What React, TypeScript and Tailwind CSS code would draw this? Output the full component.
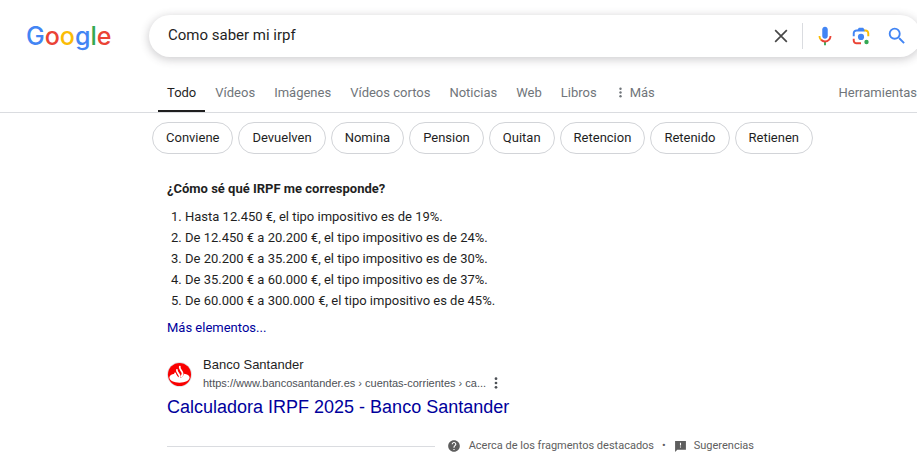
import { useState } from "react";
import { clsx } from "clsx";

const tabs = ["Todo", "Vídeos", "Imágenes", "Vídeos cortos", "Noticias", "Web", "Libros"];

const chips = ["Conviene", "Devuelven", "Nomina", "Pension", "Quitan", "Retencion", "Retenido", "Retienen"];

const brackets = [
  "Hasta 12.450 €, el tipo impositivo es de 19%.",
  "De 12.450 € a 20.200 €, el tipo impositivo es de 24%.",
  "De 20.200 € a 35.200 €, el tipo impositivo es de 30%.",
  "De 35.200 € a 60.000 €, el tipo impositivo es de 37%.",
  "De 60.000 € a 300.000 €, el tipo impositivo es de 45%.",
];

function DotsIcon({ className }: { className?: string }) {
  return (
    <svg viewBox="0 0 4 14" className={className} fill="currentColor" aria-hidden="true">
      <circle cx="2" cy="2" r="1.6" />
      <circle cx="2" cy="7" r="1.6" />
      <circle cx="2" cy="12" r="1.6" />
    </svg>
  );
}

function CloseIcon() {
  return (
    <svg viewBox="0 0 24 24" className="h-5 w-5" fill="none" stroke="#474747" strokeWidth="2" aria-hidden="true">
      <path d="M5 5l14 14M19 5L5 19" />
    </svg>
  );
}

function MicIcon() {
  return (
    <svg viewBox="0 0 24 24" className="h-[22px] w-[22px]" aria-hidden="true">
      <path fill="#4285f4" d="M12 15c1.66 0 3-1.31 3-2.97v-7.02c0-1.66-1.34-3.01-3-3.01s-3 1.34-3 3.01v7.02c0 1.66 1.34 2.97 3 2.97z" />
      <path fill="#34a853" d="M11 18.08h2v3.92h-2z" />
      <path fill="#fbbc04" d="M7.05 16.87c-1.27-1.33-2.05-2.83-2.05-4.87h2c0 1.45.56 2.42 1.47 3.38v.32l-1.15 1.18z" />
      <path fill="#ea4335" d="M12 16.93a4.97 5.25 0 0 1 -3.54 -1.55l-1.41 1.49c1.26 1.34 3.02 2.13 4.95 2.13 3.87 0 6.99-2.92 6.99-7h-1.99c0 2.92-2.24 4.93-5 4.93z" />
    </svg>
  );
}

function LensIcon() {
  return (
    <svg viewBox="0 0 192 192" className="h-[22px] w-[22px]" aria-hidden="true">
      <circle fill="#34a853" cx="144" cy="148" r="19" />
      <circle fill="#4285f4" cx="96" cy="104" r="27" />
      <path fill="#ea4335" d="M24 120v15.200c0 18.110 14.690 32.800 32.800 32.800H96v-17H57c-9 0-16-7-16-16v-15z" />
      <path fill="#fbbc04" d="M168 98V72.800c0-18.110-14.690-32.800-32.800-32.800H122v17h13c9 0 16 7 16 16v25z" />
      <path fill="#4285f4" d="M24 98V72.800C24 54.690 38.690 40 56.800 40H66l12-16h36l12 16v17H57c-9 0-16 7-16 16v25z" />
    </svg>
  );
}

function SearchIcon() {
  return (
    <svg viewBox="0 0 24 24" className="h-[22px] w-[22px]" fill="#4285f4" aria-hidden="true">
      <path d="M15.5 14h-.79l-.28-.27A6.47 6.47 0 0 0 16 9.5 6.5 6.5 0 1 0 9.5 16c1.61 0 3.09-.59 4.23-1.57l.27.28v.79l5 4.99L20.49 19l-4.99-5zm-6 0C7.01 14 5 11.99 5 9.5S7.01 5 9.5 5 14 7.01 14 9.5 11.99 14 9.5 14z" />
    </svg>
  );
}

function SantanderIcon() {
  return (
    <svg viewBox="0 0 26 26" className="h-[25px] w-[25px]" aria-hidden="true">
      <circle cx="13" cy="13" r="12.5" fill="#fff" stroke="#d9dbe0" />
      <circle cx="13" cy="13" r="12" fill="#f90000" />
      {/* base and flame */}
      <path fill="#fff" d="M2.500 16.200c0-2.200 2.200-3.700 5.500-4.100.3 1.800 2.200 3.900 5 4.400 2.500-.4 4.300-2 4.600-4.400 3.600.4 5.900 1.900 5.900 4.100 0 3-4.700 5.300-10.500 5.300S2.500 19.200 2.500 16.200z" />
      <path fill="none" stroke="#fff" strokeWidth="1.900" strokeLinecap="round" d="M13.300 4.800c-1 2.500 3.100 4.900 2.900 7.300-.1 1.200-.6 2-1 2.600M10.300 8.300c-.6 2.300 3 4.300 2.900 6.500 0 .8-.2 1.300-.4 1.800M8.400 11.800c.1 2 2 3.200 2.600 4.800" />
    </svg>
  );
}

function HelpIcon() {
  return (
    <svg viewBox="0 0 24 24" className="h-[14px] w-[14px]" fill="#5e5e5e" aria-hidden="true">
      <path d="M12 2C6.480 2 2 6.480 2 12s4.480 10 10 10 10-4.480 10-10S17.520 2 12 2zm1 17h-2v-2h2v2zm2.070-7.750-.9.920C13.450 12.900 13 13.500 13 15h-2v-.5c0-1.100.45-2.100 1.170-2.830l1.240-1.260c.37-.36.59-.86.59-1.410 0-1.100-.9-2-2-2s-2 .9-2 2H8c0-2.210 1.790-4 4-4s4 1.790 4 4c0 .88-.36 1.680-.93 2.250z" />
    </svg>
  );
}

function FeedbackIcon() {
  return (
    <svg viewBox="0 0 24 24" className="h-[13px] w-[13px]" fill="#5e5e5e" aria-hidden="true">
      <path d="M22 2H2v20l4-4h16V2zm-9 12h-2v-2h2v2zm0-4h-2V5h2v5z" />
    </svg>
  );
}

export default function App() {
  const [query, setQuery] = useState("Como saber mi irpf");
  const [activeTab, setActiveTab] = useState("Todo");

  return (
    <div className="min-h-screen overflow-x-hidden bg-white font-['Roboto',sans-serif] text-[13px] text-[#1f1f1f]">
      <header className="border-b border-[#dadce0]">
        <div className="flex items-center pt-[15px]">
          <a href="#" aria-label="Google" className="w-[149px] shrink-0 pl-[26px] font-['Inter',sans-serif] text-[25px] leading-8 font-medium">
            <span className="text-[#4285f4]">G</span>
            <span className="text-[#ea4335]">o</span>
            <span className="text-[#fbbc05]">o</span>
            <span className="text-[#4285f4]">g</span>
            <span className="text-[#34a853]">l</span>
            <span className="text-[#ea4335]">e</span>
          </a>
          <form
            role="search"
            onSubmit={(e) => e.preventDefault()}
            className="-mr-1 flex h-[42px] min-w-0 flex-1 items-center rounded-full bg-white pr-[13px] pl-[19px] shadow-[0_2px_8px_1px_rgba(64,60,67,0.24)]"
          >
            <input
              aria-label="Buscar"
              value={query}
              onChange={(e) => setQuery(e.target.value)}
              className="min-w-0 flex-1 bg-transparent pb-px text-[15px] outline-none"
            />
            <button type="button" aria-label="Borrar" onClick={() => setQuery("")} className="mr-[11px]">
              <CloseIcon />
            </button>
            <div className="flex items-center gap-[14px] border-l border-[#dadce0] py-[2px] pl-[11px]">
              <button type="button" aria-label="Buscar por voz"><MicIcon /></button>
              <button type="button" aria-label="Buscar por imagen"><LensIcon /></button>
              <button type="submit" aria-label="Buscar"><SearchIcon /></button>
            </div>
          </form>
        </div>

        <nav className="mt-[18px] flex h-[37px] items-stretch gap-px pl-[158px] text-[#70757a]">
          {tabs.map((tab) => (
            <a
              key={tab}
              href="#"
              onClick={() => setActiveTab(tab)}
              className={clsx(
                "flex items-center border-b-2 px-[9px]",
                activeTab === tab ? "border-[#1f1f1f] text-[#1f1f1f]" : "border-transparent",
              )}
            >
              {tab}
            </a>
          ))}
          <button type="button" className="flex items-center gap-2 border-b-2 border-transparent pl-3">
            <DotsIcon className="h-[11px] w-[3px]" />
            Más
          </button>
          <button type="button" className="ml-auto border-b-2 border-transparent">Herramientas</button>
        </nav>
      </header>

      <div className="mt-[9px] flex gap-[5px] pl-[152px]">
        {chips.map((chip) => (
          <button key={chip} type="button" className="h-8 rounded-full border border-[#d2d4d8] px-[13px]">
            {chip}
          </button>
        ))}
      </div>

      <main className="max-w-[754px] pl-[167px]">
        <h2 className="mt-[25px] leading-5 font-bold">¿Cómo sé qué IRPF me corresponde?</h2>
        <ol className="mt-[7px] list-decimal pl-[18px] leading-[21px]">
          {brackets.map((text) => (
            <li key={text}>{text}</li>
          ))}
        </ol>
        <a href="#" className="mt-[7px] block leading-5 text-[#00009c]">Más elementos...</a>

        <article className="mt-[18px] font-['Liberation_Sans',sans-serif]">
          <div className="flex items-center">
            <SantanderIcon />
            <div className="ml-[11px]">
              <div className="leading-[18px]">Banco Santander</div>
              <div className="flex items-center text-[11px] leading-[18px] text-[#4d5156]">
                <cite className="not-italic">https://www.bancosantander.es › cuentas-corrientes › ca...</cite>
                <button type="button" aria-label="Más información" className="ml-2">
                  <DotsIcon className="h-3 w-1" />
                </button>
              </div>
            </div>
          </div>
          <h3 className="mt-[3px] text-[18px] leading-6">
            <a href="#" className="text-[#00009c]">Calculadora IRPF 2025 - Banco Santander</a>
          </h3>
        </article>

        <footer className="mt-[17px] flex items-center text-[11px] leading-5 text-[#5e5e5e]">
          <div className="mr-3 h-px flex-1 bg-[#dadce0]" />
          <a href="#" className="flex items-center gap-2">
            <HelpIcon />
            Acerca de los fragmentos destacados
          </a>
          <span className="mx-2">•</span>
          <a href="#" className="flex items-center gap-[7px]">
            <FeedbackIcon />
            Sugerencias
          </a>
        </footer>
      </main>
    </div>
  );
}
